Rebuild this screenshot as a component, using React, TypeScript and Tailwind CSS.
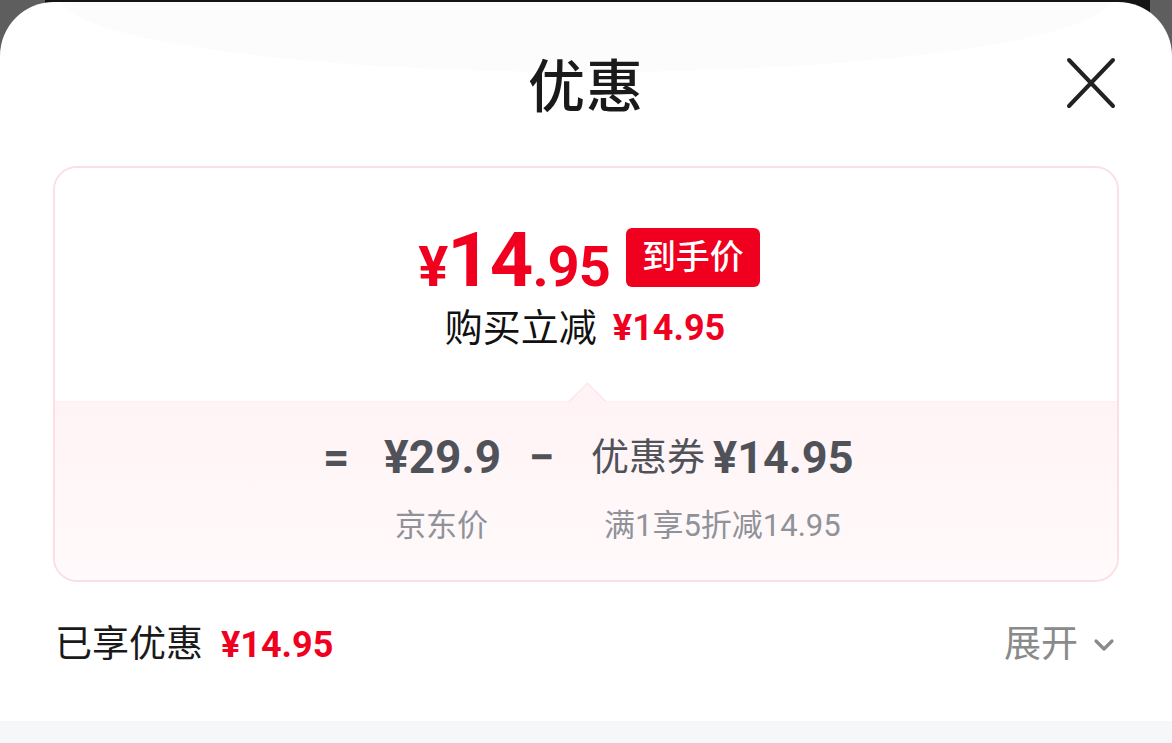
import React from 'react';
import { ChevronDown } from 'lucide-react';

const FONT = "font-['Roboto','Noto_Sans_CJK_SC',sans-serif]";

function Price({ big }: { big?: boolean }) {
  if (big) {
    return (
      <span className="font-bold text-[#f0001e] leading-none tracking-[-1px]">
        <span className="text-[56px]">¥</span>
        <span className="text-[76px]">14</span>
        <span className="text-[56px]">.95</span>
      </span>
    );
  }
  return <span className="font-bold text-[#f0001e] text-[36px] leading-none">¥14.95</span>;
}

export default function App() {
  return (
    <div className={`${FONT} h-[743px] w-[1172px] overflow-hidden pt-[2px] bg-[linear-gradient(to_right,#5e5e5e_0,#5e5e5e_45px,#141414_45px,#141414_1150px,#5e5e5e_1150px)]`}>
      <div className="relative h-[741px] rounded-t-[54px] bg-white overflow-hidden flex flex-col">
        <div className="absolute left-[60px] right-[60px] top-[-80px] h-[150px] rounded-[50%] bg-[#fcfcfc]" />

        <div className="relative h-[162px] flex items-start justify-center pt-[57px]">
          <h1 className="text-[57px] font-medium leading-none text-[#1a1a1a] tracking-[1px]">优惠</h1>
          <svg className="absolute right-[56px] top-[55px]" width="50" height="52" viewBox="0 0 50 52" fill="none">
            <path d="M3 3 L47 49 M47 3 L3 49" stroke="#222" strokeWidth="4" strokeLinecap="round" />
          </svg>
        </div>

        <div className="relative mx-[53px] mt-[2px] h-[416px] rounded-[24px] border-2 border-[#fbdfe5] overflow-hidden flex flex-col">
          <div className="h-[233px] bg-white flex flex-col items-center pt-[54px]">
            <div className="flex items-center gap-[16px] pl-[6px]">
              <Price big />
              <span className="mt-[-6px] rounded-[6px] bg-[#f0001e] px-[16px] h-[59px] flex items-center text-white text-[34px] font-medium leading-none">
                到手价
              </span>
            </div>
            <div className="mt-[11px] flex items-center gap-[16px] pr-[2px]">
              <span className="text-[38px] text-[#111] leading-none">购买立减</span>
              <Price />
            </div>
          </div>

          <div className="relative flex-1 border-t border-[#fdeef1] bg-[linear-gradient(to_bottom,#fff3f5,#fffafb)]">
            <div className="absolute left-[519px] top-[-14px] h-[27px] w-[27px] rotate-45 border-l border-t border-[#fbe0e6] bg-[#fff3f5]" />
            <div className="flex items-center mt-[32px] ml-[268px] text-[#50525a] leading-none whitespace-nowrap">
              <span className="w-[61px] text-[46px] font-bold">=</span>
              <span className="w-[145px] text-[46px] font-bold">¥29.9</span>
              <span className="w-[62px] text-[46px] font-bold">−</span>
              <span className="text-[38px]">优惠券</span>
              <span className="ml-[8px] text-[45px] font-bold">¥14.95</span>
            </div>
            <div className="flex mt-[30px] text-[#909299] text-[31px] leading-none">
              <span className="ml-[340px]">京东价</span>
              <span className="ml-[116px]">满1享5折减14.95</span>
            </div>
          </div>
        </div>

        <div className="h-[139px] flex items-center justify-between pl-[55px] pr-[52px] pb-[14px]">
          <div className="flex items-center gap-[18px]">
            <span className="text-[37px] text-[#1a1a1a] leading-none">已享优惠</span>
            <Price />
          </div>
          <div className="flex items-center gap-[10px] text-[#8a8a8a]">
            <span className="text-[37px] leading-none">展开</span>
            <ChevronDown size={32} strokeWidth={2.4} />
          </div>
        </div>

        <div className="flex-1 bg-[#f6f7f9]" />
      </div>
    </div>
  );
}
